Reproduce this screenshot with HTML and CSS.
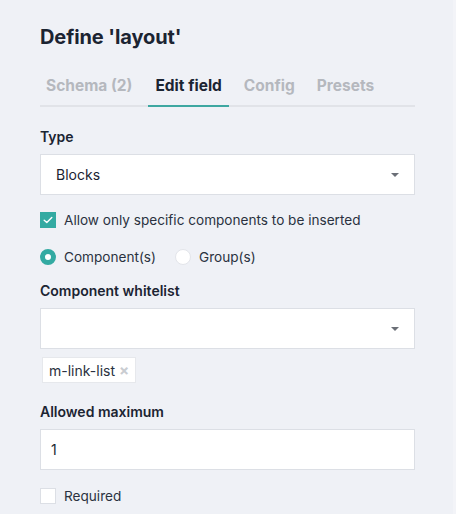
FILE: index.html
```html
<!DOCTYPE html>
<html>
<head>
<meta charset="utf-8">
<link rel="stylesheet" href="styles.css">
</head>
<body>
<div class="panel">
  <h1 class="title">Define 'layout'</h1>
  <nav class="tabs">
    <span class="tab">Schema (2)</span>
    <span class="tab active">Edit field</span>
    <span class="tab">Config</span>
    <span class="tab">Presets</span>
  </nav>

  <div class="label first">Type</div>
  <div class="select"><span>Blocks</span><span class="caret"></span></div>

  <div class="check-row">
    <span class="checkbox checked">
      <svg width="10" height="8" viewBox="0 0 10 8"><path d="M1.2 4.2 L3.8 6.6 L8.8 1.4" fill="none" stroke="#fff" stroke-width="1.4" stroke-linecap="round" stroke-linejoin="round"/></svg>
    </span>
    <span>Allow only specific components to be inserted</span>
  </div>

  <div class="radio-row">
    <span class="radio-item"><span class="radio on"></span>Component(s)</span>
    <span class="radio-item"><span class="radio"></span>Group(s)</span>
  </div>

  <div class="label whitelist">Component whitelist</div>
  <div class="select"><span></span><span class="caret"></span></div>
  <div class="tags">
    <span class="tag">m-link-list <span class="x">×</span></span>
  </div>

  <div class="label maximum">Allowed maximum</div>
  <div class="input">1</div>

  <div class="check-row last">
    <span class="checkbox"></span>
    <span>Required</span>
  </div>
</div>
</body>
</html>
```

FILE: styles.css
```css
html, body {
  margin: 0;
  padding: 0;
  background: #eff1f6;
}
body {
  font-family: Inter, "Liberation Sans", sans-serif;
  color: #1b2432;
  width: 456px;
  height: 514px;
  overflow: hidden;
  box-sizing: border-box;
  border-right: 3px solid #f3f4f8;
}
.panel {
  padding: 24px 38px 0 40px;
}
.title {
  margin: 0;
  font-size: 20px;
  font-weight: 700;
  line-height: 26px;
  letter-spacing: -0.1px;
}
.tabs {
  display: flex;
  margin-top: 18px;
  border-bottom: 2px solid #e1e3e8;
  padding-left: 6px;
}
.tab {
  font-size: 15.5px;
  font-weight: 700;
  color: #b5b8be;
  padding: 8px 0 10px;
  margin-right: 22px;
  margin-bottom: -2px;
  border-bottom: 2px solid transparent;
}
.tab:first-child { margin-right: 16px; }
.tab.active {
  color: #1b2432;
  border-bottom-color: #3ea7a1;
  padding-left: 7px;
  padding-right: 7px;
  margin-right: 15px;
}
.label {
  font-size: 14px;
  font-weight: 600;
  margin-top: 17px;
  line-height: 18px;
}
.label.first { margin-top: 21px; }
.label.whitelist { margin-top: 16px; }
.label.maximum { margin-top: 20px; }
.select, .input {
  margin-top: 8px;
  height: 41px;
  box-sizing: border-box;
  background: #fff;
  border: 1px solid #dcdfe5;
  display: flex;
  align-items: center;
  justify-content: space-between;
  padding: 0 15px 0 15px;
  font-size: 14px;
}
.input { padding-left: 10px; }
.caret {
  width: 0;
  height: 0;
  border-left: 4px solid transparent;
  border-right: 4px solid transparent;
  border-top: 4px solid #6b6f77;
}
.check-row {
  display: flex;
  align-items: center;
  margin-top: 16px;
  font-size: 13.6px;
  line-height: 18px;
  color: #2a3140;
}
.checkbox {
  width: 16px;
  height: 16px;
  box-sizing: border-box;
  border: 1px solid #dcdfe5;
  background: #fff;
  margin-right: 8px;
  display: flex;
  align-items: center;
  justify-content: center;
}
.checkbox.checked {
  background: #33aaa2;
  border-color: #33aaa2;
}
.radio-row {
  display: flex;
  margin-top: 19px;
  font-size: 13.6px;
  line-height: 18px;
  color: #2a3140;
}
.radio-item {
  display: flex;
  align-items: center;
  margin-right: 19px;
}
.radio {
  width: 16px;
  height: 16px;
  box-sizing: border-box;
  border-radius: 50%;
  background: #fff;
  border: 1px solid #e3e5ea;
  margin-right: 8px;
}
.radio.on {
  background: #fff;
  border: 5px solid #33aaa2;
}
.tags {
  display: flex;
  margin-top: 8px;
  padding-left: 2px;
}
.tag {
  background: #fff;
  border: 1px solid #e6e8ec;
  font-size: 14px;
  height: 26px;
  box-sizing: border-box;
  display: flex;
  align-items: center;
  padding: 0 6px;
  color: #2a3140;
}
.tag .x {
  color: #c9ccd1;
  font-size: 15px;
  margin-left: 4px;
  font-weight: 700;
}
.check-row.last { margin-top: 17px; }
```
